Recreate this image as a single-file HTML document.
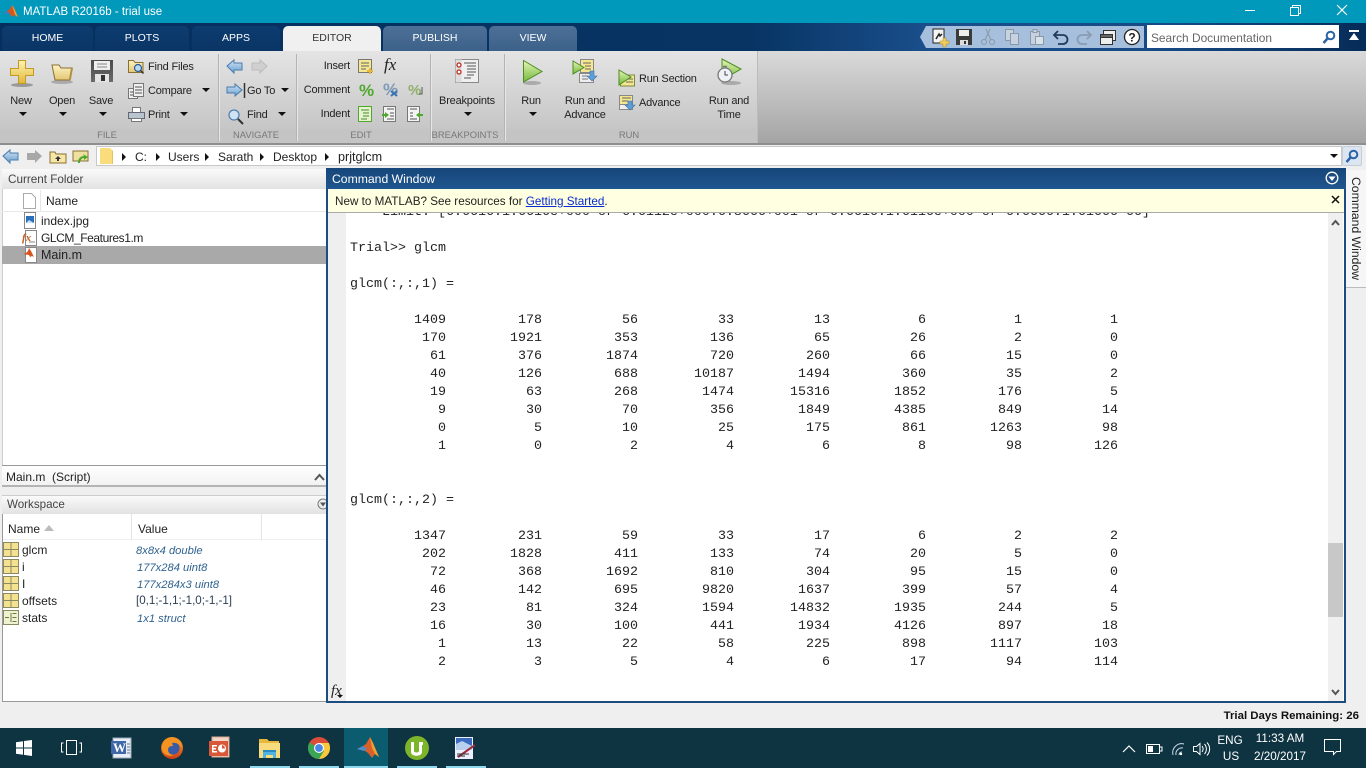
<!DOCTYPE html>
<html><head><meta charset="utf-8"><title>MATLAB R2016b - trial use</title>
<style>
html,body{margin:0;padding:0}
body{width:1366px;height:768px;position:relative;overflow:hidden;background:#efefef;font-family:"Liberation Sans",sans-serif;font-size:12px;color:#222}
.a,.t,svg.i{position:absolute}
.t{white-space:nowrap;line-height:14px}
.f{font-size:11px;letter-spacing:-.2px;margin-top:1px}
.c{transform:translateX(-50%)}
.r{transform:translateX(-100%)}
.tab{position:absolute;top:26px;height:25px;border-radius:5px 5px 0 0;color:#fff;text-align:center;line-height:25px;font-size:10.5px;background:linear-gradient(#0d3c70,#0a3565)}
.tab.l{background:linear-gradient(#4d7097,#3c6189)}
.car{position:absolute;width:0;height:0;border-left:4px solid transparent;border-right:4px solid transparent;border-top:4px solid #111}
.sep{position:absolute;top:54px;height:87px;width:1px;background:#b4b4b4;box-shadow:1px 0 0 #e6e6e6}
.fl{position:absolute;color:#777;font-size:9.4px;line-height:14px;white-space:nowrap;transform:translateX(-50%);top:128px}
.addr{position:absolute;top:153px;width:0;height:0;border-top:4px solid transparent;border-bottom:4px solid transparent;border-left:4px solid #111}
table{position:absolute;left:350px;border-collapse:collapse;font:13.33px/18px "Liberation Mono",monospace;color:#222}
td{width:96px;height:18px;padding:0;text-align:right}
.m{position:absolute;left:350px;font:13.33px/18px "Liberation Mono",monospace;white-space:pre;color:#222}
.v{font-style:italic;color:#2f628f;left:136px;font-size:11.2px;margin-top:1px}
.ul{position:absolute;top:766px;height:2px;background:#8fd8ee}
.tr{color:#fff;font-size:11.7px}
</style></head><body>
<svg width="0" height="0" style="position:absolute"><defs>
<linearGradient id="gy" x1="0" y1="0" x2="0" y2="1"><stop offset="0" stop-color="#fff3b0"/><stop offset="1" stop-color="#e0b83c"/></linearGradient>
<linearGradient id="gf" x1="0" y1="0" x2="0" y2="1"><stop offset="0" stop-color="#fdf3c4"/><stop offset="1" stop-color="#e4c672"/></linearGradient>
<linearGradient id="gb" x1="0" y1="0" x2="0" y2="1"><stop offset="0" stop-color="#cfe3f5"/><stop offset="1" stop-color="#6ba0d0"/></linearGradient>
<linearGradient id="gg" x1="0" y1="0" x2="0" y2="1"><stop offset="0" stop-color="#e6f5b8"/><stop offset="1" stop-color="#72b83a"/></linearGradient>
<linearGradient id="gfl" x1="0" y1="0" x2="0" y2="1"><stop offset="0" stop-color="#ff9a1e"/><stop offset="1" stop-color="#c9401a"/></linearGradient>
<linearGradient id="gs" x1="0" y1="0" x2="0" y2="1"><stop offset="0" stop-color="#4a4a4a"/><stop offset="1" stop-color="#6a6a6a"/></linearGradient>
</defs></svg>

<!-- title bar -->
<div class="a" style="left:0;top:0;width:1366px;height:23px;background:#0099bb"></div>
<svg class="i" style="left:3px;top:4px" width="16" height="15" viewBox="0 0 16 15"><path d="M0 9l4-2 3-2 2-4 2 3 4 9-3-2-3 2-2-3-2-1z" fill="#d9541e"/><path d="M0 9l4-2 3 2-2 1z" fill="#3f7fbf"/><path d="M9 1l2 3 4 9-3-2z" fill="#f0a030"/></svg>
<div class="t" style="left:23px;top:5px;color:#fff;font-size:11.5px">MATLAB R2016b - trial use</div>
<svg class="i" style="left:1240px;top:0" width="126" height="23" viewBox="0 0 126 23" fill="none" stroke="#fff"><path d="M5 10.500h10"/><path d="M50.500 7.500h8v8h-8zM52.500 7.500v-2h8v8h-2"/><path d="M97 5l10 10M107 5l-10 10" stroke-width="1.200"/></svg>

<!-- tab strip -->
<div class="a" style="left:0;top:23px;width:1366px;height:28px;background:linear-gradient(90deg,#062f5e 0,#073463 55%,#1a4f8c 68%,#174a85 85%,#062c58 100%)"></div>
<div class="tab" style="left:2px;width:91px">HOME</div>
<div class="tab" style="left:95px;width:94px">PLOTS</div>
<div class="tab" style="left:192px;width:88px">APPS</div>
<div class="tab" style="left:283px;width:98px;background:#f0f0f0;color:#333">EDITOR</div>
<div class="tab l" style="left:383px;width:104px">PUBLISH</div>
<div class="tab l" style="left:489px;width:88px">VIEW</div>

<!-- quick access -->
<svg class="i" style="left:920px;top:26px" width="224" height="22" viewBox="0 0 224 22"><path d="M6 0H224V22H6L0 11z" fill="#a6bfdc"/>
<g transform="translate(12,3)"><path d="M1 0h11v14H1z" fill="#f4f4f4" stroke="#222"/><path d="M4 10l3-5 1 2 2-2" stroke="#222" fill="none" stroke-width="1.500"/><path d="M11 9h3v3h3v3h-3v3h-3v-3H8v-3h3z" fill="#f2cd5c" stroke="#b08a20" stroke-width=".5"/></g>
<g transform="translate(36,3)"><path d="M0 0h16v16H0z" fill="#3a3a3a"/><path d="M3 1h10v6H3z" fill="#eee"/><path d="M4 11h8v5H4z" fill="#ddd"/><path d="M8 12h2v3H8z" fill="#333"/></g>
<g transform="translate(61,3)" fill="none" stroke="#8a98a8"><path d="M9 0L4 11M5 0l5 11"/><circle cx="3" cy="13" r="2.500"/><circle cx="11" cy="13" r="2.500"/></g>
<g transform="translate(85,3)" fill="#c6d2e0" stroke="#8a98a8"><path d="M.5.500h8v11h-8z"/><path d="M5.500 4.500h8v11h-8z"/></g>
<g transform="translate(109,3)" fill="#c6d2e0" stroke="#8a98a8"><path d="M1.500 2.500h9v13h-9z"/><path d="M4 .5h4v3H4z"/><path d="M6.500 7.500h8v8h-8z" fill="#d8e0ea"/></g>
<g transform="translate(133,4)" fill="none" stroke="#203a5c" stroke-width="1.800"><path d="M5 1L1 5l4 4"/><path d="M1 5h9a4 4 0 0 1 0 9H5"/></g>
<g transform="translate(156,4)" fill="none" stroke="#8a9cb2" stroke-width="1.800"><path d="M11 1l4 4-4 4"/><path d="M15 5H6a4 4 0 0 0 0 9h5"/></g>
<g transform="translate(180,3)" fill="#eee" stroke="#333"><path d="M3.500 1.500h12v10h-12z"/><path d="M.5 5.500h12v10H.5z"/><path d="M.5 5.500h12v3H.5z" fill="#666"/></g>
<g transform="translate(204,3)"><circle cx="8" cy="8" r="7.500" fill="#fff" stroke="#222" stroke-width="1.300"/><text x="8" y="12.500" text-anchor="middle" font-family="Liberation Sans" font-weight="bold" font-size="12" fill="#222">?</text></g>
</svg>
<div class="a" style="left:1147px;top:25px;width:192px;height:23px;background:#fff"></div>
<div class="t" style="left:1151px;top:31px;color:#666;font-size:11.9px">Search Documentation</div>
<svg class="i" style="left:1322px;top:30px" width="14" height="15" viewBox="0 0 14 15" fill="none" stroke="#2a63a8" stroke-width="2"><circle cx="8.500" cy="5.500" r="3.800"/><path d="M5.500 8.500L1.500 13" stroke-width="2.500"/></svg>
<svg class="i" style="left:1348px;top:30px" width="12" height="12" viewBox="0 0 12 12" fill="#fff"><path d="M1 0h10v2H1zM6 3l5 7H1z"/></svg>

<!-- ribbon -->
<div class="a" style="left:0;top:51px;width:1366px;height:93px;background:linear-gradient(#dadada,#a4a4a4)"></div>
<div class="a" style="left:0;top:51px;width:757px;height:93px;background:linear-gradient(#e4e4e4,#c6c6c6 85%);box-shadow:1px 0 0 #bbb"></div>
<div class="a" style="left:0;top:129px;width:757px;height:14px;background:#c4c4c4"></div>
<div class="a" style="left:0;top:143px;width:1366px;height:2px;background:#8e8e8e"></div>
<div class="sep" style="left:218px"></div><div class="sep" style="left:296px"></div><div class="sep" style="left:430px"></div><div class="sep" style="left:504px"></div>
<div class="fl" style="left:107px">FILE</div><div class="fl" style="left:256px">NAVIGATE</div><div class="fl" style="left:361px">EDIT</div><div class="fl" style="left:465px">BREAKPOINTS</div><div class="fl" style="left:629px">RUN</div>

<!-- New Open Save -->
<svg class="i" style="left:8px;top:58px" width="110" height="30" viewBox="0 0 110 30">
<ellipse cx="14" cy="27" rx="11" ry="2" fill="#999"/><path d="M10.500 2.500h7v8h8v7h-8v8h-7v-8h-8v-7h8z" fill="url(#gy)" stroke="#c49a25"/>
<ellipse cx="54" cy="24" rx="11" ry="2" fill="#aaa"/><path d="M44 7h7l2 3h11l-2 12H47z" fill="url(#gf)" stroke="#8a7030"/><path d="M63 10h2l-2 11h-2z" fill="#b09040"/>
<path d="M83 2h22v22H83z" fill="url(#gs)"/><path d="M86 3h16v9H86z" fill="#eee"/><path d="M89 6h10M89 9h10" stroke="#888"/><path d="M87 16h14v8H87z" fill="#e4e4e4"/><path d="M93 17h4v6h-4z" fill="#333"/></svg>
<div class="t c f" style="left:21px;top:93px">New</div><div class="t c f" style="left:62px;top:93px">Open</div><div class="t c f" style="left:101px;top:93px">Save</div>
<div class="car" style="left:19px;top:112px"></div><div class="car" style="left:59px;top:112px"></div><div class="car" style="left:99px;top:112px"></div>
<!-- file small -->
<svg class="i" style="left:128px;top:58px" width="18" height="66" viewBox="0 0 18 66">
<path d="M.5 2.500h5l1.500 2h8v10H.5z" fill="url(#gf)" stroke="#8a7030"/><circle cx="10" cy="10" r="3.500" fill="#bcd8f0" stroke="#2a5d9c" stroke-width="1.200"/><path d="M12.500 12.500l3 3" stroke="#333" stroke-width="1.500"/>
<g fill="#f0f0f0" stroke="#777"><path d="M.5 30.500h9v10h-9z"/><path d="M5.500 25.500h10v13h-10z"/></g><path d="M7 29h7M7 32h7M7 35h7M2 34h3M2 37h3" stroke="#555"/>
<path d="M4.500 49.500h8v5h-8z" fill="#fff" stroke="#777"/><path d="M.5 54.500h16v6H.5z" fill="#b8c4d0" stroke="#667"/><path d="M3.500 60.500h10v3h-10z" fill="#fff" stroke="#777"/></svg>
<div class="t f" style="left:148px;top:59px">Find Files</div><div class="t f" style="left:148px;top:83px">Compare</div><div class="t f" style="left:148px;top:107px">Print</div>
<div class="car" style="left:202px;top:88px"></div><div class="car" style="left:180px;top:112px"></div>
<!-- navigate -->
<svg class="i" style="left:226px;top:58px" width="44" height="68" viewBox="0 0 44 68">
<path d="M1 8l7-6v3h8v7H8v3z" fill="url(#gb)" stroke="#4a7cab"/><path d="M41 8l-7-6v3h-8v7h8v3z" fill="#d0d0d0" stroke="#bbb"/>
<path d="M1 29h8v-3l7 6-7 6v-3H1z" fill="url(#gb)" stroke="#4a7cab"/><path d="M18.500 25v15" stroke="#333" stroke-width="1.500"/>
<circle cx="8" cy="57" r="5" fill="#cfe3f5" stroke="#5580b0" stroke-width="1.300"/><path d="M12 61l5 5" stroke="#333" stroke-width="2"/></svg>
<div class="t f" style="left:247px;top:83px">Go To</div><div class="t f" style="left:247px;top:107px">Find</div>
<div class="car" style="left:281px;top:88px"></div><div class="car" style="left:278px;top:112px"></div>
<!-- edit -->
<div class="t r f" style="left:350px;top:58px">Insert</div><div class="t r f" style="left:350px;top:82px">Comment</div><div class="t r f" style="left:350px;top:106px">Indent</div>
<svg class="i" style="left:357px;top:57px" width="68" height="66" viewBox="0 0 68 66">
<path d="M1.500 2.500h13v13h-13z" fill="#f5e690" stroke="#777"/><path d="M4 6h8M4 9h8M4 12h5" stroke="#666"/><path d="M12 11h2v2h2v2h-2v2h-2v-2h-2v-2h2z" fill="#e8b838"/>
<text x="2" y="39" font-family="Liberation Sans" font-size="17" font-weight="bold" fill="#4fa82e">%</text>
<text x="26" y="38" font-family="Liberation Sans" font-size="17" font-weight="bold" fill="#7e9ab8">%</text><path d="M34 34l6 5M40 34l-6 5" stroke="#3a74b0" stroke-width="2"/>
<text x="51" y="38" font-family="Liberation Sans" font-size="15" font-weight="bold" fill="#8fb06a">%</text><path d="M65 30v7h-3" stroke="#555" fill="none"/>
<path d="M1.500 49.500h13v15h-13z" fill="#e6f2d0" stroke="#4fa82e"/><path d="M4 53h8M6 56h6M6 59h6M4 62h6" stroke="#4a8a2c"/>
<path d="M26.500 49.500h12v15h-12z" fill="#f4f4f4" stroke="#777"/><path d="M30 52h7M33 56h4M33 59h4M30 62h7" stroke="#555"/><path d="M25 57h3v-2l4 3-4 3v-2h-3z" fill="#4fa82e"/>
<path d="M50.500 49.500h12v15h-12z" fill="#f4f4f4" stroke="#777"/><path d="M53 52h7M53 56h3M53 59h3M53 62h7" stroke="#555"/><path d="M66 57h-3v-2l-4 3 4 3v-2h3z" fill="#4fa82e"/></svg>
<div class="t" style="left:384px;top:55px;font:italic 17px/20px 'Liberation Serif',serif;color:#222">fx</div>
<!-- breakpoints -->
<svg class="i" style="left:455px;top:59px" width="25" height="25" viewBox="0 0 25 25"><path d="M.5.500h23v23H.5z" fill="#efefef" stroke="#888"/><path d="M.5.500h6v23h-6z" fill="#ddd"/><circle cx="4" cy="6" r="2" fill="#fff" stroke="#c02a20" stroke-width="1.300"/><circle cx="4" cy="13" r="2" fill="#fff" stroke="#c02a20" stroke-width="1.300"/><path d="M9 4h12M12 7h9M12 10h9M12 13h9M12 16h7M9 19h7" stroke="#555"/></svg>
<div class="t c f" style="left:467px;top:93px">Breakpoints</div><div class="car" style="left:464px;top:112px"></div>
<!-- run -->
<svg class="i" style="left:522px;top:58px" width="22" height="28" viewBox="0 0 22 28"><ellipse cx="10" cy="25" rx="9" ry="2" fill="#aaa"/><path d="M1.500 2.500L20 13.500 1.500 24z" fill="url(#gg)" stroke="#4c8c22"/></svg>
<div class="t c f" style="left:531px;top:93px">Run</div><div class="car" style="left:529px;top:112px"></div>
<svg class="i" style="left:572px;top:58px" width="27" height="27" viewBox="0 0 27 27"><path d="M8.500 1.500h13v13h-13z" fill="#f5e690" stroke="#888"/><path d="M11 5h8M13 8h6M13 11h6" stroke="#666"/><path d="M1 3l11 6.500L1 16z" fill="url(#gg)" stroke="#4c8c22"/><path d="M7.500 15.500h14v9h-14z" fill="#eee" stroke="#888"/><path d="M10 18h6M10 21h6" stroke="#777"/><path d="M18 13h4v5h3l-5 5-5-5h3z" fill="#5f9fd8" stroke="#3a6fa8" stroke-width=".6"/></svg>
<div class="t c f" style="left:585px;top:93px">Run and</div><div class="t c f" style="left:585px;top:107px">Advance</div>
<svg class="i" style="left:618px;top:69px" width="18" height="43" viewBox="0 0 18 43"><path d="M2.500 6h14v11h-14z" fill="#f5e690" stroke="#7a8a40"/><path d="M8 10h7M8 13h7" stroke="#666"/><path d="M1 1l12 7L1 16z" fill="url(#gg)" stroke="#4c8c22"/><path d="M1.500 26.500h13v9h-13z" fill="#f5e690" stroke="#888"/><path d="M4 29h9M4 32h6" stroke="#666"/><path d="M1.500 35.500h13v5h-13z" fill="#eee" stroke="#888"/><path d="M10 32h4v4h3l-5 5-5-5h3z" fill="#5f9fd8" stroke="#3a6fa8" stroke-width=".6"/></svg>
<div class="t f" style="left:639px;top:71px">Run Section</div><div class="t f" style="left:639px;top:95px">Advance</div>
<svg class="i" style="left:717px;top:58px" width="26" height="28" viewBox="0 0 26 28"><ellipse cx="14" cy="25" rx="10" ry="2" fill="#aaa"/><path d="M5 1l19 10-19 11z" fill="url(#gg)" stroke="#4c8c22"/><circle cx="8" cy="17" r="7" fill="#eef2f6" stroke="#777" stroke-width="1.300"/><path d="M8 13v4h3" stroke="#444" fill="none"/><path d="M6 8.500h4" stroke="#777" stroke-width="1.500"/></svg>
<div class="t c f" style="left:729px;top:93px">Run and</div><div class="t c f" style="left:729px;top:107px">Time</div>

<!-- address bar -->
<div class="a" style="left:0;top:145px;width:1366px;height:24px;background:#efefef"></div>
<svg class="i" style="left:2px;top:148px" width="88" height="17" viewBox="0 0 88 17">
<path d="M1 8l7-6v3h8v7H8v3z" fill="url(#gb)" stroke="#4a7cab"/><path d="M40 8l-7-6v3h-8v7h8v3z" fill="#a8a8a8"/>
<path d="M48 4h5l1 2h10v9H48z" fill="#f6e6a8" stroke="#8a7030"/><path d="M56 8l3 3h-2v2h-2v-2h-2z" fill="#333"/>
<path d="M71 3h15v10H71z" fill="#efe0a0" stroke="#8a7030"/><path d="M76 15c0-5 3-7 6-7l-1-2 5 3-4 3 0-2c-2 0-4 2-4 5z" fill="#4fa82e"/></svg>
<div class="a" style="left:96px;top:146px;width:1246px;height:20px;background:#fff;border:1px solid #c8c8c8;box-sizing:border-box"></div>
<svg class="i" style="left:100px;top:148px" width="14" height="16" viewBox="0 0 14 16"><path d="M0 0h10l2 2v14H0z" fill="#fbdc7c"/><path d="M12 2v14h1V3z" fill="#e6c25a"/></svg>
<div class="addr" style="left:122px"></div><div class="t" style="left:135px;top:150px">C:</div>
<div class="addr" style="left:156px"></div><div class="t" style="left:168px;top:150px">Users</div>
<div class="addr" style="left:205px"></div><div class="t" style="left:218px;top:150px">Sarath</div>
<div class="addr" style="left:260px"></div><div class="t" style="left:273px;top:150px">Desktop</div>
<div class="addr" style="left:325px"></div><div class="t" style="left:338px;top:150px;font-size:12.6px">prjtglcm</div>
<div class="car" style="left:1330px;top:154px"></div>
<div class="a" style="left:1342px;top:146px;width:20px;height:20px;background:#dbe6f2;border:1px solid #c4cdd8;box-sizing:border-box;border-radius:2px"></div>
<svg class="i" style="left:1345px;top:149px" width="14" height="15" viewBox="0 0 14 15" fill="none" stroke="#2a63a8" stroke-width="2"><circle cx="8.500" cy="5.500" r="3.800"/><path d="M5.500 8.500L1.500 13" stroke-width="2.500"/></svg>

<!-- current folder -->
<div class="a" style="left:2px;top:169px;width:324px;height:297px;background:#fff;border-left:1px solid #ccc;box-sizing:border-box"></div>
<div class="a" style="left:2px;top:169px;width:324px;height:20px;background:linear-gradient(#fafafa,#e2e2e2)"></div>
<div class="t" style="left:8px;top:173px;color:#444;font-size:11.7px">Current Folder</div>
<svg class="i" style="left:23px;top:193px" width="13" height="16" viewBox="0 0 13 16"><path d="M.5.500h8l4 4v11H.5z" fill="#fff" stroke="#aaa"/></svg>
<div class="a" style="left:40px;top:190px;width:1px;height:21px;background:#e6e6e6"></div>
<div class="a" style="left:2px;top:211px;width:324px;height:1px;background:#e8e8e8"></div>
<div class="t" style="left:46px;top:193.500px">Name</div>
<div class="a" style="left:2px;top:246px;width:324px;height:18px;background:#a9a9a9"></div>
<svg class="i" style="left:22px;top:212px" width="16" height="52" viewBox="0 0 16 52">
<path d="M2.500.500h11v16h-11z" fill="#fff" stroke="#888"/><path d="M4 4h8v7H4z" fill="#2a6fb8"/><path d="M4 11l3-3 5 3z" fill="#bfe0f8"/>
<path d="M3.500 18.500h11v15h-11z" fill="#fff" stroke="#888"/><text x="0" y="29" font-family="Liberation Serif" font-style="italic" font-weight="bold" font-size="11" fill="#c4601e">fx</text><path d="M7 30h6" stroke="#888"/>
<path d="M3.500 35.500h11v15h-11z" fill="#fff" stroke="#888"/><path d="M1 42l3-1 2-2 1-3 2 3 3 6-2-1-2 1-1-2z" fill="#d9541e"/></svg>
<div class="t" style="left:41px;top:214px">index.jpg</div><div class="t" style="left:41px;top:231px;letter-spacing:-.42px">GLCM_Features1.m</div><div class="t" style="left:41px;top:248px;font-size:12.5px">Main.m</div>

<!-- details -->
<div class="a" style="left:2px;top:465px;width:324px;height:22px;background:linear-gradient(#fff,#f2f2f2);border-top:1px solid #999;border-bottom:2px solid #b4b4b4;box-sizing:border-box"></div>
<div class="t" style="left:6px;top:470px">Main.m&nbsp; (Script)</div>
<svg class="i" style="left:314px;top:473px" width="11" height="8" viewBox="0 0 11 8"><path d="M1 7l4.500-5L10 7" fill="none" stroke="#555" stroke-width="2"/></svg>

<!-- workspace -->
<div class="a" style="left:2px;top:495px;width:324px;height:207px;background:#fff;border-left:1px solid #999;border-bottom:1px solid #999;box-sizing:border-box"></div>
<div class="a" style="left:2px;top:495px;width:324px;height:19px;background:linear-gradient(#fafafa,#e2e2e2);border-top:1px solid #ccc;box-sizing:border-box"></div>
<div class="t" style="left:7px;top:498px;color:#444;font-size:11.6px">Workspace</div>
<svg class="i" style="left:317px;top:498px" width="9" height="12" viewBox="0 0 9 12"><circle cx="6" cy="6" r="5" fill="#eee" stroke="#777"/><path d="M3 4.500h6L6 8.500z" fill="#555"/></svg>
<div class="a" style="left:3px;top:514px;width:323px;height:26px;background:#fff;border-bottom:1px solid #eee;box-sizing:border-box"></div>
<div class="a" style="left:131px;top:514px;width:1px;height:26px;background:#e4e4e4"></div><div class="a" style="left:261px;top:514px;width:1px;height:26px;background:#e4e4e4"></div>
<div class="t" style="left:8px;top:522px">Name</div>
<svg class="i" style="left:44px;top:525px" width="10" height="6"><path d="M0 6L5 0l5 6z" fill="#bbb"/></svg>
<div class="t" style="left:138px;top:522px">Value</div>
<svg class="i" style="left:3px;top:542px" width="16" height="84" viewBox="0 0 16 84" stroke="#8a8a60" fill="#f5e290">
<g><path d="M.5.500h15v14H.5z"/><path d="M8 .5v14M.5 7.500h15" fill="none"/></g>
<g transform="translate(0,17)"><path d="M.5.500h15v14H.5z"/><path d="M8 .5v14M.5 7.500h15" fill="none"/></g>
<g transform="translate(0,34)"><path d="M.5.500h15v14H.5z"/><path d="M8 .5v14M.5 7.500h15" fill="none"/></g>
<g transform="translate(0,51)"><path d="M.5.500h15v14H.5z"/><path d="M8 .5v14M.5 7.500h15" fill="none"/></g>
<g transform="translate(0,68)"><path d="M.5.500h15v14H.5z" fill="#eef2d0"/><path d="M2 7.500h4M9.500 3.500h4M9.500 7.500h4M9.500 11.500h4M8 3v9" fill="none" stroke="#6a7a40"/></g></svg>
<div class="t" style="left:22px;top:543px">glcm</div><div class="t v" style="top:543px">8x8x4 double</div>
<div class="t" style="left:22px;top:560px">i</div><div class="t v" style="left:137px;top:560px">177x284 uint8</div>
<div class="t" style="left:22px;top:577px">I</div><div class="t v" style="left:137px;top:577px">177x284x3 uint8</div>
<div class="t" style="left:22px;top:594px">offsets</div><div class="t" style="left:136px;top:594px;color:#2b3f55;font-size:11.6px">[0,1;-1,1;-1,0;-1,-1]</div>
<div class="t" style="left:22px;top:611px">stats</div><div class="t v" style="left:137px;top:611px">1x1 struct</div>

<!-- command window -->
<div class="a" style="left:326px;top:168px;width:1020px;height:535px;background:#fff;border:2px solid #1d4d80;border-top:0;box-sizing:border-box"></div>
<div class="a" style="left:328px;top:213px;width:18px;height:488px;background:#efefef"></div>
<div class="m" style="top:204px">    Limit: [6.6616:1.6616e+000 or 6.6112e+000:6.8666+001 or 6.6616:1.6116e+000 or 6.6666:1.61666 66]</div>
<div class="a" style="left:326px;top:168px;width:1020px;height:21px;background:linear-gradient(#164679,#1f568f)"></div>
<div class="t" style="left:332px;top:172px;color:#fff;font-size:12.2px">Command Window</div>
<svg class="i" style="left:1325px;top:171px" width="14" height="14" viewBox="0 0 14 14"><circle cx="7" cy="7" r="5.800" fill="none" stroke="#fff" stroke-width="1.300"/><path d="M3.500 5.500h7L7 10z" fill="#fff"/></svg>
<div class="a" style="left:328px;top:189px;width:1016px;height:24px;background:#ffffe1;border-bottom:1px solid #aaa;box-sizing:border-box"></div>
<div class="t" style="left:335px;top:194.500px;font-size:11.7px">New to MATLAB? See resources for <span style="color:#0a2ccc;text-decoration:underline">Getting Started</span>.</div>
<svg class="i" style="left:1331px;top:195px" width="9" height="9" viewBox="0 0 9 9"><path d="M1 1l7 7M8 1L1 8" stroke="#111" stroke-width="1.500"/></svg>
<div class="m" style="top:240px">Trial&gt;&gt; glcm</div>
<div class="m" style="top:276px">glcm(:,:,1) =</div>
<table style="top:312px">
<tr><td>1409<td>178<td>56<td>33<td>13<td>6<td>1<td>1</tr>
<tr><td>170<td>1921<td>353<td>136<td>65<td>26<td>2<td>0</tr>
<tr><td>61<td>376<td>1874<td>720<td>260<td>66<td>15<td>0</tr>
<tr><td>40<td>126<td>688<td>10187<td>1494<td>360<td>35<td>2</tr>
<tr><td>19<td>63<td>268<td>1474<td>15316<td>1852<td>176<td>5</tr>
<tr><td>9<td>30<td>70<td>356<td>1849<td>4385<td>849<td>14</tr>
<tr><td>0<td>5<td>10<td>25<td>175<td>861<td>1263<td>98</tr>
<tr><td>1<td>0<td>2<td>4<td>6<td>8<td>98<td>126</tr>
</table>
<div class="m" style="top:492px">glcm(:,:,2) =</div>
<table style="top:528px">
<tr><td>1347<td>231<td>59<td>33<td>17<td>6<td>2<td>2</tr>
<tr><td>202<td>1828<td>411<td>133<td>74<td>20<td>5<td>0</tr>
<tr><td>72<td>368<td>1692<td>810<td>304<td>95<td>15<td>0</tr>
<tr><td>46<td>142<td>695<td>9820<td>1637<td>399<td>57<td>4</tr>
<tr><td>23<td>81<td>324<td>1594<td>14832<td>1935<td>244<td>5</tr>
<tr><td>16<td>30<td>100<td>441<td>1934<td>4126<td>897<td>18</tr>
<tr><td>1<td>13<td>22<td>58<td>225<td>898<td>1117<td>103</tr>
<tr><td>2<td>3<td>5<td>4<td>6<td>17<td>94<td>114</tr>
</table>
<div class="t" style="left:331px;top:683px;font:italic 15px/16px 'Liberation Serif',serif;color:#222">fx</div>
<div class="car" style="left:337px;top:695px;border-left-width:3px;border-right-width:3px;border-top-width:3px"></div>
<div class="a" style="left:1328px;top:213px;width:15px;height:488px;background:#f0f0f0"></div>
<div class="a" style="left:1328px;top:543px;width:15px;height:74px;background:#c8c8c8"></div>
<svg class="i" style="left:1331px;top:219px" width="9" height="7" viewBox="0 0 9 7"><path d="M1 6l3.500-4L8 6" fill="none" stroke="#555" stroke-width="2"/></svg>
<svg class="i" style="left:1331px;top:689px" width="9" height="7" viewBox="0 0 9 7"><path d="M1 1l3.500 4L8 1" fill="none" stroke="#555" stroke-width="2"/></svg>
<div class="a" style="left:1346px;top:170px;width:20px;height:118px;background:#f6f6f6;border-bottom:1px solid #bbb;box-sizing:border-box"></div>
<div class="t" style="left:1349px;top:177px;writing-mode:vertical-rl;line-height:14px;font-size:12.2px">Command Window</div>

<!-- status -->
<div class="t r" style="left:1359px;top:709px;font-weight:bold;font-size:11.45px;color:#111">Trial Days Remaining: 26</div>

<!-- taskbar -->
<div class="a" style="left:0;top:728px;width:1366px;height:40px;background:#0e3341"></div>
<div class="a" style="left:344px;top:728px;width:44px;height:40px;background:#0c5c70"></div>
<svg class="i" style="left:16px;top:740px" width="16" height="16" viewBox="0 0 16 16" fill="#fff"><path d="M0 2.200l7-1V7.500H0zM8 1l8-1v7.500H8zM0 8.500h7v6.300l-7-1zM8 8.500h8V16l-8-1.100z"/></svg>
<svg class="i" style="left:61px;top:740px" width="21" height="15" viewBox="0 0 21 15" fill="none" stroke="#fff"><path d="M5.500.500h10v14h-10zM2.500 3H.5v9h2M18.500 3h2v9h-2"/></svg>
<svg class="i" style="left:110px;top:736px" width="24" height="24" viewBox="0 0 24 24"><path d="M3 2h18v20H3z" fill="#e8eef6" stroke="#9ab"/><path d="M1 5h15v13H1z" fill="#3f68a8"/><text x="3" y="16" font-family="Liberation Serif" font-weight="bold" font-size="13" fill="#fff">W</text><path d="M17 8h3M17 11h3M17 14h3M17 17h3" stroke="#678"/></svg>
<svg class="i" style="left:160px;top:736px" width="24" height="24" viewBox="0 0 24 24"><circle cx="12" cy="12" r="11" fill="url(#gfl)"/><circle cx="13" cy="12" r="6.500" fill="#3a5ba8"/><path d="M2 10c2-7 9-9 13-8 5 1 7 6 7 10-3-4-6-6-10-5l1 3c-3 0-5 1-5 4 0 3 3 5 6 5-5 2-10 0-12-5z" fill="#f59322"/></svg>
<svg class="i" style="left:208px;top:736px" width="24" height="24" viewBox="0 0 24 24"><path d="M4 1h17v20H4z" fill="#f4d6c8" stroke="#d8a890"/><path d="M1 5h19v15H1z" fill="#d9583a"/><path d="M4 9h5v1.500H5.500V12H8v1.500H5.500V15H9v1.500H4z" fill="#fff"/><circle cx="14" cy="12.500" r="4" fill="#fff"/><path d="M14 12.500V9a3.500 3.500 0 0 1 3 3.500z" fill="#d9583a"/></svg>
<svg class="i" style="left:259px;top:738px" width="22" height="20" viewBox="0 0 22 20"><path d="M0 1h8l2 2h10v3H0z" fill="#e8b83c"/><path d="M0 5h21v15H0z" fill="#f8db7c"/><path d="M4 14h13v6h-3v-3H7v3H4z" fill="#4fb4e0"/><path d="M4 12h13v2H4z" fill="#2a8ac0"/></svg>
<svg class="i" style="left:308px;top:737px" width="22" height="22" viewBox="0 0 22 22"><circle cx="11" cy="11" r="11" fill="#dd4b3a"/><path d="M11 11L1.500 5.500A11 11 0 0 0 11 22l5-8z" fill="#3aa655"/><path d="M11 6h9.800A11 11 0 0 1 11 22l5-8z" fill="#f7c93c"/><circle cx="11" cy="11" r="5" fill="#fff"/><circle cx="11" cy="11" r="3.900" fill="#4a85e8"/></svg>
<svg class="i" style="left:356px;top:737px" width="24" height="22" viewBox="0 0 24 22"><path d="M1 12l6-3 3-2L14 0l3 6 6 14-4-3-3 4-4-5-3-2z" fill="#d9602a"/><path d="M1 12l6-3 4 3-3 2z" fill="#4c8cd0"/><path d="M14 0l3 6 6 14-4-3-3-6z" fill="#f0a030"/></svg>
<svg class="i" style="left:405px;top:736px" width="24" height="24" viewBox="0 0 24 24"><circle cx="12" cy="12" r="12" fill="#7cb52a"/><path d="M6 6h3v9c0 2 5 2 5 0V6h4v3h-1v7c0 5-11 5-11 0z" fill="#fff"/></svg>
<svg class="i" style="left:454px;top:737px" width="22" height="22" viewBox="0 0 22 22"><path d="M1 0h18v22H1z" fill="#eef"/><path d="M2 1h16v12H2z" fill="#3a6bc0"/><path d="M2 7l6-3 10 5v4H2z" fill="#b8d0ee"/><path d="M4 20L21 8" stroke="#a02a3a" stroke-width="2"/><path d="M3 17h12M3 19h8" stroke="#333"/></svg>
<div class="ul" style="left:250px;width:40px"></div><div class="ul" style="left:299px;width:40px"></div><div class="ul" style="left:344px;width:44px"></div><div class="ul" style="left:397px;width:40px"></div><div class="ul" style="left:446px;width:40px"></div>
<svg class="i" style="left:1122px;top:741px" width="92" height="16" viewBox="0 0 92 16" fill="none" stroke="#fff">
<path d="M1 11l6-6 6 6" stroke-width="1.200"/><path d="M24.500 3.500h13v9h-13zM38 6h2v4h-2"/><path d="M26 5h5v6h-5z" fill="#fff" stroke="none"/>
<path d="M51 14a9 9 0 0 1 11-11M54 14a6 6 0 0 1 7-7M57 14a3 3 0 0 1 3-3" stroke="#cde"/><circle cx="59" cy="13" r="1.200" fill="#fff" stroke="none"/>
<path d="M71.500 5.500h3l3.500-3v11l-3.500-3h-3zM80 5c1.500 2 1.500 4 0 6M82.500 3c2.500 3 2.500 7 0 10M85 1.500c3.500 4 3.500 9 0 13"/></svg>
<div class="t c tr" style="left:1230px;top:734px">ENG</div><div class="t c tr" style="left:1231px;top:750px">US</div>
<div class="t c tr" style="left:1280px;top:732px">11:33 AM</div><div class="t c tr" style="left:1280px;top:750px">2/20/2017</div>
<svg class="i" style="left:1324px;top:739px" width="18" height="17" viewBox="0 0 18 17" fill="none" stroke="#fff"><path d="M.5.500h16v12h-4l-3 3v-3H.5z"/></svg>
</body></html>
